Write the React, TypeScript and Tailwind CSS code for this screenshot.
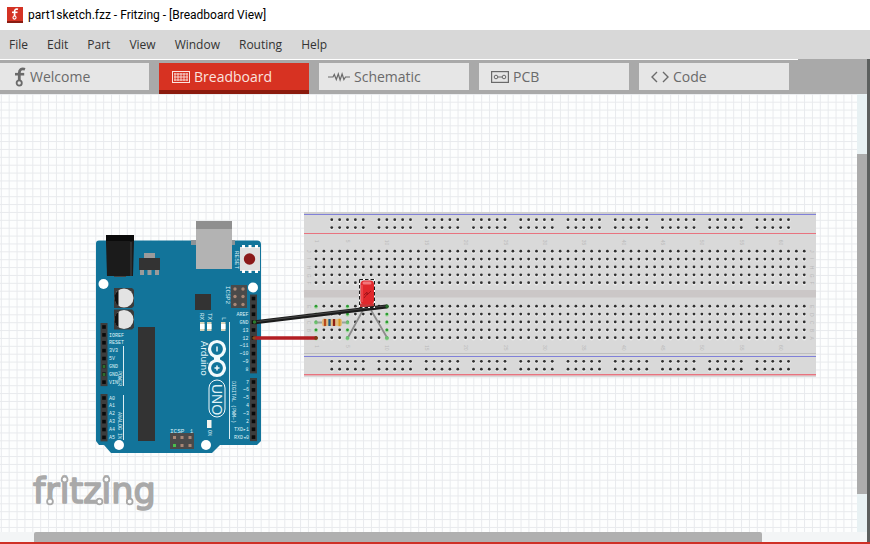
import type { ReactNode } from "react";

const PITCH = 7.875;
const range = (n: number) => Array.from({ length: n }, (_, i) => i);

const menus = ["File", "Edit", "Part", "View", "Window", "Routing", "Help"];

function FritzingMark({ className }: { className: string }) {
  return (
    <svg viewBox="0 0 12 20" className={className} fill="none" stroke="currentColor" aria-hidden="true">
      <path d="M11 2.2C7.5 1 5.3 2.6 5.3 6v7.5" strokeWidth="2.8" />
      <path d="M1 7.2h9.2" strokeWidth="2.6" />
      <circle cx="5.2" cy="16" r="2.6" strokeWidth="1.8" />
    </svg>
  );
}

function BreadboardIcon() {
  return (
    <svg viewBox="0 0 18 12" className="h-3 w-[18px]" fill="none" stroke="currentColor" aria-hidden="true">
      <rect x="0.5" y="0.5" width="17" height="11" />
      {[3.5, 6.5, 9.5, 12.5, 15.5].map((x) => (
        <path key={x} d={`M${x - 0.5} 2v8`} strokeWidth="0.9" />
      ))}
      {[3, 6, 9].map((y) => (
        <path key={y} d={`M2 ${y}h14`} strokeWidth="0.9" />
      ))}
    </svg>
  );
}

function SchematicIcon() {
  return (
    <svg viewBox="0 0 22 10" className="h-[10px] w-[22px]" fill="none" stroke="currentColor" strokeWidth="1.2" aria-hidden="true">
      <path d="M0 5h5l1.300-2.500 2 5L10.300 2l1.800 6 2-6 1.800 5.500L17.500 5H22" />
    </svg>
  );
}

function PcbIcon() {
  return (
    <svg viewBox="0 0 18 12" className="h-3 w-[18px]" fill="none" stroke="currentColor" aria-hidden="true">
      <rect x="0.600" y="0.600" width="16.800" height="10.800" strokeWidth="1.2" />
      <circle cx="5" cy="6" r="1.8" />
      <circle cx="13" cy="6" r="1.8" />
      <path d="M6.800 6h4.400" />
    </svg>
  );
}

function CodeIcon() {
  return (
    <svg viewBox="0 0 18 12" className="h-3 w-[18px]" fill="none" stroke="currentColor" strokeWidth="1.4" aria-hidden="true">
      <path d="M6 1 1 6l5 5M12 1l5 5-5 5" />
    </svg>
  );
}

const tabs: { name: string; icon: ReactNode; inset: string }[] = [
  { name: "Welcome", icon: <FritzingMark className="h-5 w-3" />, inset: "pl-[15px] gap-1" },
  { name: "Breadboard", icon: <BreadboardIcon />, inset: "pl-[13px] gap-1" },
  { name: "Schematic", icon: <SchematicIcon />, inset: "pl-[9px] gap-1" },
  { name: "PCB", icon: <PcbIcon />, inset: "pl-[12px] gap-1" },
  { name: "Code", icon: <CodeIcon />, inset: "pl-[12px] gap-1" },
];

function Header({ x, y, n }: { x: number; y: number; n: number }) {
  return (
    <g>
      <rect x={x - 3.5} y={y - 4} width="7" height={(n - 1) * PITCH + 8} fill="#3d3d3d" />
      {range(n).map((i) => (
        <rect key={i} x={x - 1.8} y={y - 1.8 + i * PITCH} width="3.6" height="3.6" fill="#0a0a0a" />
      ))}
    </g>
  );
}

function Labels({ x, y, items, end }: { x: number; y: number; items: string[]; end?: boolean }) {
  return (
    <g fontSize="5" textAnchor={end ? "end" : "start"}>
      {items.map((t, i) => (
        <text key={i} x={x} y={y + 1.6 + i * PITCH}>
          {t}
        </text>
      ))}
    </g>
  );
}

function Capacitor({ y }: { y: number }) {
  return (
    <g>
      <path d={`M114 ${y - 10}h18l2 2v16l-2 2h-18z`} fill="#3b3b3b" />
      <circle cx="124" cy={y} r="9.500" fill="#e3e3e3" />
      <path d={`M118.500 ${y - 7.8}a9.500 9.500 0 0 0 0 15.600z`} fill="#111111" />
    </g>
  );
}

function Arduino() {
  return (
    <g fontFamily='"Liberation Mono", monospace' fill="#dff1f6">
      <path d="M99 240.500H257a4 4 0 0 1 4 4V441l-4 4H220l-8 8H111l-7-8h-5l-3-4V243.500a3 3 0 0 1 3-3Z" fill="#12749a" />
      <path d="M106 235h28v7l-1 34h-26l-1-34z" fill="#1b1b1b" />
      <path d="M106 235h28v6h-28z" fill="#0b0b0b" />
      <path d="M131 242v34" stroke="#303030" strokeWidth="2" />
      <path d="M114 276h12v1h-12z" fill="#444444" />
      <rect x="144" y="253" width="11" height="6" fill="#9b9b9b" />
      <rect x="139" y="258" width="21" height="12" fill="#333333" />
      {[140, 147.500, 155].map((x) => (
        <rect key={x} x={x} y="270" width="4" height="5" fill="#9b9b9b" />
      ))}
      <rect x="191" y="240" width="44" height="5" fill="#8d9397" />
      <rect x="196" y="221" width="36" height="48" fill="#b3b3b3" />
      <rect x="196" y="221" width="36" height="8" fill="#8f8f8f" />
      <rect x="240" y="247" width="20" height="24" fill="#e0e0e0" />
      {[242, 248.500, 255].map((x) => (
        <g key={x} fill="#ffffff">
          <rect x={x} y="245" width="3" height="3" />
          <rect x={x} y="270" width="3" height="3" />
        </g>
      ))}
      <circle cx="249.500" cy="259" r="5.700" fill="#8b1a1a" />
      <text transform="translate(235 251) rotate(90)" fontSize="6">RESET</text>
      <text transform="translate(226 286) rotate(90)" fontSize="6">ICSP2</text>
      <circle cx="103.500" cy="284" r="5" fill="#ffffff" />
      <circle cx="253" cy="287.500" r="5" fill="#ffffff" />
      <circle cx="119" cy="445" r="5" fill="#ffffff" />
      <circle cx="206" cy="445" r="5" fill="#ffffff" />
      <Capacitor y={298} />
      <Capacitor y={319.5} />
      <rect x="138" y="327" width="17" height="114" fill="#333333" />
      <rect x="195" y="294" width="16" height="16" fill="#333333" />
      <rect x="231" y="285" width="16" height="23" fill="#4a4a4a" />
      {[235, 243].map((x) =>
        [289, 296.500, 304.500].map((y) => <circle key={`${x}-${y}`} cx={x} cy={y} r="1.700" fill="#a98776" />)
      )}
      <rect x="170" y="433" width="24" height="16" fill="#4a4a4a" />
      {[174.500, 182, 190].map((x) =>
        [437.500, 445.500].map((y) => (
          <rect key={`${x}-${y}`} x={x - 1.500} y={y - 1.500} width="3" height="3" fill={x < 175 && y > 440 ? "#4bbf4b" : "#a98776"} />
        ))
      )}
      <text x="170" y="432.500" fontSize="6">ICSP</text>
      <text x="190" y="432.500" fontSize="5">1</text>
      {[200, 207, 221].map((x) => (
        <g key={x}>
          <rect x={x} y="322" width="4.500" height="9" fill="#d8d2b8" />
          <rect x={x} y="324" width="4.500" height="5" fill="#ffffff" />
        </g>
      ))}
      <text transform="translate(200 313) rotate(90)" fontSize="6">RX</text>
      <text transform="translate(208 313) rotate(90)" fontSize="6">TX</text>
      <text transform="translate(222 317) rotate(90)" fontSize="6">L</text>
      <g fill="none" stroke="#f3fafc">
        <circle cx="217" cy="349" r="7.500" strokeWidth="3.200" />
        <circle cx="217" cy="368" r="7.500" strokeWidth="3.200" />
        <path d="M214 358.500h6" strokeWidth="3" />
        <path d="M217 346.500v5M214.500 368h5M217 365.500v5" strokeWidth="1.500" />
        <rect x="209" y="380" width="16" height="37" rx="8" />
        <path d="M229.500 322V439M123.500 346v40M123.500 395v45" strokeWidth="0.900" />
      </g>
      <text transform="translate(201 341) rotate(90)" fontSize="9" fontFamily='"DejaVu Sans", sans-serif'>Arduino</text>
      <text transform="translate(212 384) rotate(90)" fontSize="14" fontFamily='"Liberation Sans", sans-serif'>UNO</text>
      <rect x="207" y="420" width="4.500" height="8" fill="#f4f4ee" />
      <text transform="translate(208 430) rotate(90)" fontSize="5">ON</text>
      <text transform="translate(231.500 381) rotate(90)" fontSize="5">DIGITAL (PWM~)</text>
      <text transform="translate(118 371) rotate(90)" fontSize="5">POWER</text>
      <text transform="translate(118 412) rotate(90)" fontSize="5">ANALOG IN</text>
      <Header x={253.5} y={298.500} n={10} />
      <Header x={253.5} y={382} n={8} />
      <Header x={104} y={327} n={8} />
      <Header x={104} y={398} n={6} />
      <Labels end x={248.5} y={314.300} items={["AREF", "GND", "13", "12", "~11", "~10", "~9", "8"]} />
      <Labels end x={249} y={382} items={["7", "~6", "~5", "4", "~3", "2", "TXD▸1", "RXD◂0"]} />
      <Labels x={109} y={335} items={["IOREF", "RESET", "3V3", "5V", "GND", "GND", "VIN"]} />
      <Labels x={109} y={398} items={["A0", "A1", "A2", "A3", "A4", "A5"]} />
      <g fill="#2f6b2f">
        <rect x="102.500" y="365" width="3" height="3" />
        <rect x="102.500" y="373" width="3" height="3" />
      </g>
    </g>
  );
}

function Hole({ x, y, live }: { x: number; y: number; live?: boolean }) {
  return (
    <g>
      <circle cx={x} cy={y + 0.7} r="2" fill={live ? "#a9dba6" : "#ececec"} />
      <circle cx={x} cy={y} r="1.400" fill={live ? "#2c9a33" : "#2e2e2e"} />
    </g>
  );
}

function Breadboard() {
  const cols = range(63);
  const live = [0, 4, 9];
  return (
    <g>
      <rect x="304" y="212" width="512" height="165" fill="#d9d9d9" />
      <rect x="304" y="212" width="512" height="2" fill="#cfcfcf" />
      <rect x="304" y="290" width="512" height="7.500" fill="#cbc7c7" />
      <path d="M304 353.500H816" stroke="#bfbfbf" />
      <path d="M304 214.500H816M304 356.500H816" stroke="#8080d8" />
      <path d="M304 233.500H816M304 374.500H816" stroke="#e8737f" />
      <path d="M304 375.500H816" stroke="#e3b3b8" />
      {[219.7, 227.6, 361.3, 369.2].map((y) =>
        range(60)
          .filter((i) => i % 6 !== 5)
          .map((i) => <Hole key={`${i}-${y}`} x={316 + (i + 2) * PITCH} y={y} />)
      )}
      {range(5).map((r) =>
        cols.map((c) => (
          <g key={`${r}-${c}`}>
            <Hole x={316 + c * PITCH} y={251.2 + r * PITCH} />
            <Hole x={316 + c * PITCH} y={306.2 + r * PITCH} live={live.includes(c)} />
          </g>
        ))
      )}
      <g fontFamily='"Liberation Sans", sans-serif' fontSize="5" fill="#bababa">
        {[1, 5, 10, 15, 20, 25, 30, 35, 40, 45, 50, 55, 60].map((n) => {
          const x = 316 + (n - 1) * PITCH;
          return (
            <g key={n}>
              <text transform={`translate(${x - 1.5} 239.800) rotate(90)`}>{n}</text>
              <text transform={`translate(${x - 1.5} 345) rotate(90)`}>{n}</text>
            </g>
          );
        })}
        {["J", "I", "H", "G", "F", "E", "D", "C", "B", "A"].map((t, i) => {
          const y = i < 5 ? 250 + i * PITCH : 305 + (i - 5) * PITCH;
          return (
            <g key={t}>
              <text transform={`translate(307 ${y}) rotate(90)`}>{t}</text>
              <text transform={`translate(810 ${y}) rotate(90)`}>{t}</text>
            </g>
          );
        })}
      </g>
    </g>
  );
}

function Parts() {
  return (
    <g>
      <g stroke="#8c8c8c" strokeWidth="1.800" strokeLinecap="round">
        <path d="M362.500 311 348 337.500M371.500 311 387 337.500" />
        <path d="M316.500 322.500H347" stroke="#9aa39a" />
      </g>
      <g fill="#6cc070">
        <circle cx="347.500" cy="338" r="1.800" />
        <circle cx="387" cy="338" r="1.800" />
        <circle cx="316" cy="322.500" r="1.500" />
        <circle cx="347.500" cy="322.500" r="1.500" />
      </g>
      <path d="M322 321q0-2.500 2.500-2.500 1.500 0 2.500.800h10q1-.800 2.500-.800 2.500 0 2.500 2.500v3q0 2.500-2.500 2.500-1.500 0-2.500-.800h-10q-1 .800-2.500 .800-2.500 0-2.500-2.500z" fill="#e0bd80" />
      <path d="M325 319v7" stroke="#b8481c" strokeWidth="2.300" />
      <path d="M329.500 319v7" stroke="#1f5a86" strokeWidth="2.300" />
      <path d="M334 319v7" stroke="#8e2014" strokeWidth="2.300" />
      <path d="M339.500 319v7" stroke="#dc9820" strokeWidth="2" />
      <path d="M255 338H316" stroke="#b21d22" strokeWidth="3.500" strokeLinecap="round" />
      <circle cx="316" cy="338" r="1.800" fill="#7a3a14" />
      <circle cx="254" cy="338" r="1.800" fill="#8a4a1a" />
      <path d="M360 303.500h14l1 5h-16z" fill="#c43a3c" />
      <rect x="360.500" y="280.500" width="13.500" height="24" rx="4" fill="#e0282c" />
      <rect x="362.500" y="281.500" width="9" height="3" rx="1.500" fill="#f2777a" />
      <path d="M362 285v17" stroke="#f04c50" strokeWidth="1.500" />
      <path d="m364 295 3-3v3l4-4M364 298l4-5" stroke="#a3151a" fill="none" />
      <path d="M255 322.300 386.500 306.500" stroke="#1b1b1b" strokeWidth="4" strokeLinecap="round" />
      <path d="M257 321.500 385 306" stroke="#4a4a4a" strokeWidth="0.900" />
      <circle cx="254.500" cy="322" r="1.800" fill="#2d7a2d" />
      <circle cx="387" cy="306.200" r="1.700" fill="#276b2b" />
      <rect x="359.500" y="279.500" width="15" height="28" fill="none" stroke="#ffffff" />
      <rect x="359.500" y="279.500" width="15" height="28" fill="none" stroke="#1b1b1b" strokeDasharray="3.500 2" />
    </g>
  );
}

function FritzingLogo() {
  return (
    <g>
      <text
        x="33"
        y="503"
        fontFamily='"DejaVu Sans", sans-serif'
        fontSize="35"
        fill="#a9a9a9"
        stroke="#a9a9a9"
        strokeWidth="1.600"
        strokeLinejoin="round"
      >
        fritzing
      </text>
      <g fill="#fdfefe" stroke="#a9a9a9" strokeWidth="1.800">
        <circle cx="64.600" cy="479.500" r="2.900" />
        <circle cx="106.400" cy="479.500" r="2.900" />
        <circle cx="50" cy="501.500" r="2.900" />
        <circle cx="99.500" cy="501.500" r="2.900" />
        <circle cx="129.700" cy="501.500" r="2.900" />
      </g>
    </g>
  );
}

export default function App() {
  return (
    <div className="flex h-screen w-full flex-col overflow-hidden border-b-2 border-[#cf3127] bg-white font-['Open_Sans',sans-serif] text-xs">
      <header className="flex h-[30px] shrink-0 items-center gap-[5px] bg-white pl-[7px] font-[Roboto,sans-serif] text-black">
        <span className="flex size-4 items-center justify-center border-b-2 border-[#8a1c12] bg-[#d43324] text-white">
          <FritzingMark className="h-3 w-2" />
        </span>
        <h1>part1sketch.fzz - Fritzing - [Breadboard View]</h1>
      </header>
      <nav className="flex h-[29px] shrink-0 items-center gap-[19px] bg-[#d8d8d8] pl-[9px] text-[#333333]">
        {menus.map((m) => (
          <button key={m} type="button">
            {m}
          </button>
        ))}
      </nav>
      <div className="flex min-h-0 flex-1">
        <div className="flex min-w-0 flex-1 flex-col">
          <div className="h-px shrink-0 bg-[#a9a9a9]">
            <div className="h-full w-[92%] bg-white" />
          </div>
          <div role="tablist" className="flex h-[34px] shrink-0 gap-[10px] bg-[#a9a9a9] pt-[3px] text-sm">
            {tabs.map((t) => (
              <button
                key={t.name}
                type="button"
                role="tab"
                aria-selected={t.name === "Breadboard"}
                className={`flex w-[150px] items-center first:-ml-px ${t.inset} ${
                  t.name === "Breadboard"
                    ? "h-[31px] border-b-4 border-[#8b1a0d] bg-[#d73222] text-[#fbe3df]"
                    : "h-[27px] bg-[#e6e6e6] text-[#6a6a6a]"
                }`}
              >
                {t.icon}
                <span>{t.name}</span>
              </button>
            ))}
          </div>
          <div className="flex min-h-0 flex-1">
            <main className="relative min-w-0 flex-1 bg-[#fdfefe]">
              <svg className="absolute inset-0 h-full w-full" role="img" aria-label="Breadboard view">
                <defs>
                  <pattern id="grid" x="0.800" y="7.700" width={PITCH} height={PITCH} patternUnits="userSpaceOnUse">
                    <path d={`M0.500 0V${PITCH}M0 0.500H${PITCH}`} stroke="#e8eaed" />
                  </pattern>
                </defs>
                <rect width="100%" height="100%" fill="url(#grid)" />
                <g transform="translate(0 -94)">
                  <Arduino />
                  <Breadboard />
                  <Parts />
                  <FritzingLogo />
                </g>
              </svg>
            </main>
            <div className="flex w-[10px] shrink-0 flex-col bg-[#e8f1f3] pt-[60px]">
              <div className="h-[90%] bg-[#acacac]" />
            </div>
          </div>
          <div className="h-[10px] shrink-0 bg-[#f3f5f6] pl-[34px]">
            <div className="h-full w-[728px] max-w-full rounded-t-xs bg-[#b0b0b0]" />
          </div>
        </div>
        <div className="w-[3px] shrink-0 bg-[#5c5f5e]" />
      </div>
    </div>
  );
}
